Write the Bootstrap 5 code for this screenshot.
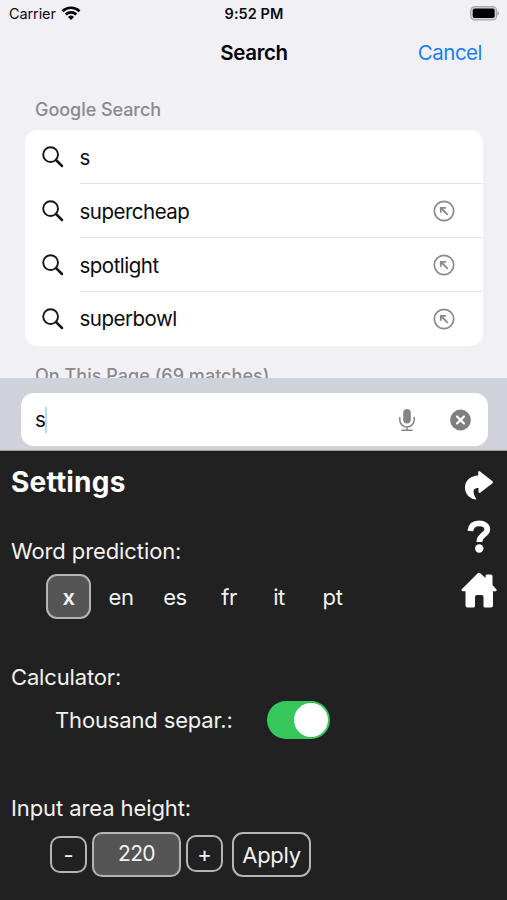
<!DOCTYPE html>
<html lang="en">
<head>
<meta charset="utf-8">
<meta name="viewport" content="width=device-width, initial-scale=1">
<title>Search</title>
<link href="https://cdn.jsdelivr.net/npm/bootstrap@5.3.0/dist/css/bootstrap.min.css" rel="stylesheet">
<style>
  body { font-family: Inter, Roboto, sans-serif; background: #f1f0f5; color: #0b0b0c; width: 507px; height: 900px; overflow: hidden; font-size: 20.5px; line-height: 26px; letter-spacing: -.35px; }
  svg { display: block; flex: none; }
  .sheet { height: 378px; overflow: hidden; }
  .status { height: 27px; padding: 0 8px 0 9px; font-size: 14.5px; letter-spacing: -.1px; }
  .side { flex: 1 1 0; }
  .clock { font-weight: 600; letter-spacing: .05px; }
  .titlebar { height: 50px; padding: 2px 25px 0; }
  .titlebar .name { font-weight: 600; color: #000; padding-left: 1px; }
  .titlebar .cancel { color: #1a80f2; letter-spacing: -.5px; }
  .heading { font-size: 18px; font-weight: 500; color: #8a8a8f; padding-left: 35px; letter-spacing: -.05px; }
  .first-heading { margin-top: 20px; height: 33px; }
  .results { margin: 0 24px 0 25px; border-radius: 13px; background: #fff; height: 216px; }
  .result { height: 54px; padding-left: 17px; letter-spacing: -.5px; }
  .result .line { height: 54px; margin-left: 15.5px; padding: 2px 28px 0 0; border-bottom: 1px solid #e6e6e9; }
  .result .line svg { margin-top: -2px; }
  .result:last-child .line { border-bottom: 0; padding-top: 0; }
  .result:last-child .line svg { margin-top: 0; }
  .searchbar { height: 73px; background: linear-gradient(#ced2db, #d1d2d9); padding: 15px 19px 0 21px; border-bottom: 1px solid #999c9e; }
  .field { height: 53px; background: #fff; border-radius: 13px; padding: 1px 16px 0 14px; }
  .caret { width: 2px; height: 26px; background: #b9d7fb; }
  .settings { height: 449px; background: #212121; color: #f2f2f2; padding: 0 10px 0 11px; font-size: 22px; line-height: 28px; letter-spacing: -.15px; }
  .settings h1 { font-size: 28px; font-weight: 700; line-height: 34px; margin: 14px 0 0; color: #fff; letter-spacing: .2px; }
  .tools { padding-top: 18px; width: 36px; }
  .lang { width: 54px; text-align: center; letter-spacing: -.4px; }
  .lang.on { width: 45px; height: 45px; border: 2px solid #b4b4b4; border-radius: 11px; background: #555; font-weight: 600; line-height: 42px; margin-right: 3px; }
  .toggle { width: 63px; height: 38px; border-radius: 19px; background: #35c759; padding: 2px 2px; }
  .knob { width: 34px; height: 34px; border-radius: 50%; background: #fff; }
  .key { border: 2px solid #b4b4b4; border-radius: 10px; height: 37px; width: 37px; }
  .key-value { background: #555; width: 89px; height: 45px; font-size: 21px; letter-spacing: -.7px; }
  .key-apply { width: 79px; height: 45px; border-radius: 11px; letter-spacing: -.3px; }
</style>
</head>
<body>
<svg width="0" height="0" class="position-absolute">
  <symbol id="lens" viewBox="0 0 22 22"><circle cx="8.600" cy="8.600" r="7.400" fill="none" stroke="#161616" stroke-width="1.900"/><path d="M14 14l6 6" stroke="#161616" stroke-width="2.500" stroke-linecap="round"/></symbol>
  <symbol id="fill-in" viewBox="0 0 22 22"><circle cx="11" cy="11" r="9.700" fill="none" stroke="#8b8b8d" stroke-width="1.700"/><path d="M14.800 14.800L8 8M7.800 12.700V7.800H13" fill="none" stroke="#8b8b8d" stroke-width="1.800"/></symbol>
</svg>

<main class="sheet">
  <div class="status d-flex align-items-center">
    <div class="side d-flex align-items-center gap-1"><span>Carrier</span>
      <svg width="20" height="14" viewBox="0 0 20 14" style="margin:-2px 0 0 1px"><g fill="none" stroke="#000" stroke-width="2.600"><path d="M1.500 5.200a12.300 12.300 0 0 1 17 0"/><path d="M4.700 8.500a7.700 7.700 0 0 1 10.600 0"/></g><path d="M10 14l-3-3.100a4.300 4.300 0 0 1 6 0z"/></svg>
    </div>
    <span class="clock">9:52 PM</span>
    <div class="side d-flex justify-content-end">
      <svg width="30" height="15" viewBox="0 0 30 15"><rect x="1.700" y=".7" width="26" height="13.200" rx="4" fill="#d5d5d7" stroke="#a9a9ab" stroke-width="1.200"/><rect x="3.700" y="2.600" width="22" height="9.400" rx="2" fill="#000"/><path d="M28.300 5q1.700.5 1.700 2.300T28.300 9.600z" fill="#a9a9ab"/></svg>
    </div>
  </div>
  <div class="titlebar d-flex align-items-center">
    <div class="side"></div><span class="name">Search</span><div class="side text-end cancel">Cancel</div>
  </div>
  <div class="heading first-heading">Google Search</div>
  <div class="results">
    <div class="result d-flex align-items-center"><svg width="22" height="22"><use href="#lens"/></svg><div class="line flex-fill d-flex align-items-center">s</div></div>
    <div class="result d-flex align-items-center"><svg width="22" height="22"><use href="#lens"/></svg><div class="line flex-fill d-flex align-items-center justify-content-between">supercheap<svg width="22" height="22"><use href="#fill-in"/></svg></div></div>
    <div class="result d-flex align-items-center"><svg width="22" height="22"><use href="#lens"/></svg><div class="line flex-fill d-flex align-items-center justify-content-between">spotlight<svg width="22" height="22"><use href="#fill-in"/></svg></div></div>
    <div class="result d-flex align-items-center"><svg width="22" height="22"><use href="#lens"/></svg><div class="line flex-fill d-flex align-items-center justify-content-between">superbowl<svg width="22" height="22"><use href="#fill-in"/></svg></div></div>
  </div>
  <div class="heading" style="margin-top:17px;letter-spacing:.03px">On This Page (69 matches)</div>
</main>

<div class="searchbar">
  <div class="field d-flex align-items-center">
    <span>s</span><span class="caret"></span>
    <svg class="ms-auto" width="18" height="24" viewBox="0 0 18 24"><rect x="5.200" y="1" width="7.600" height="14.600" rx="3.800" fill="#858587"/><path d="M1.800 9.500v2.400a7.200 7 0 0 0 14.400 0V9.500M9 19v3M4 22.300h10" fill="none" stroke="#858587" stroke-width="1.500" stroke-linecap="round"/></svg>
    <svg width="22" height="22" viewBox="0 0 22 22" style="margin-left:34px"><circle cx="10.500" cy="11" r="10.400" fill="#7f7f82"/><path d="M7 7.500l7 7m0-7l-7 7" stroke="#fff" stroke-width="2.200" stroke-linecap="round"/></svg>
  </div>
</div>

<section class="settings d-flex justify-content-between">
  <div>
    <h1>Settings</h1>
    <div style="margin-top:38px;letter-spacing:-.1px">Word prediction:</div>
    <div class="d-flex align-items-center" style="margin:9px 0 0 35px">
      <span class="lang on">x</span><span class="lang">en</span><span class="lang">es</span><span class="lang">fr</span><span class="lang" style="width:46px">it</span><span class="lang" style="width:61px">pt</span>
    </div>
    <div style="margin-top:44px">Calculator:</div>
    <div class="d-flex align-items-center" style="margin:10px 0 0 44px">
      <span>Thousand separ.:</span>
      <div class="toggle d-flex justify-content-end" style="margin-left:34px"><div class="knob"></div></div>
    </div>
    <div style="margin-top:55px;letter-spacing:-.1px">Input area height:</div>
    <div class="d-flex align-items-center" style="margin:9px 0 0 39px">
      <div class="key d-flex align-items-center justify-content-center" style="margin-top:1px">-</div>
      <div class="key key-value d-flex align-items-center justify-content-center" style="margin-left:5px">220</div>
      <div class="key d-flex align-items-center justify-content-center" style="margin:-1px 0 0 5px">+</div>
      <div class="key key-apply d-flex align-items-center justify-content-center" style="margin:1px 0 0 9px">Apply</div>
    </div>
  </div>
  <div class="tools d-flex flex-column align-items-center">
    <svg width="30" height="32" viewBox="0 0 30 32" fill="#fff"><path d="M14.200 3Q14.500 1.500 16 2.500L28.500 12.300Q29.500 13.200 28.500 14.200L16.500 23.500Q14.700 24.500 14.500 23V19C9.500 18.500 7.500 22 12.500 30.500 6 30 1 25.500 1 18.500 1 11 7 6.700 14.200 6.500z"/></svg>
    <svg width="24" height="34" viewBox="0 0 24 34" style="margin-top:18px"><path d="M3.300 12C4 6.300 7 4.300 12 4.300c5 0 8.300 2.400 8.300 6.200 0 5.300-8 5-8 12.500" fill="none" stroke="#fff" stroke-width="5.800"/><circle cx="12.200" cy="29.500" r="4.200" fill="#fff"/></svg>
    <svg width="36" height="36" viewBox="0 0 36 36" fill="#fff" style="margin-top:19px"><path d="M16.500 1.500Q18 0 19.500 1.500L24.500 6V4q0-1.500 1.500-1.500h4q1.500 0 1.500 1.500v9l4 4.500q.5 1-.5 1.800h-3V33.500q0 2-2 2h-6q-1.500 0-1.500-1.500V25q0-2-2-2h-4.500q-2 0-2 2v9q0 1.500-1.500 1.500h-6q-2 0-2-2V19.300h-3Q0 18.500.5 17.500z"/></svg>
  </div>
</section>
<script src="https://cdn.jsdelivr.net/npm/bootstrap@5.3.0/dist/js/bootstrap.bundle.min.js"></script>
</body>
</html>
